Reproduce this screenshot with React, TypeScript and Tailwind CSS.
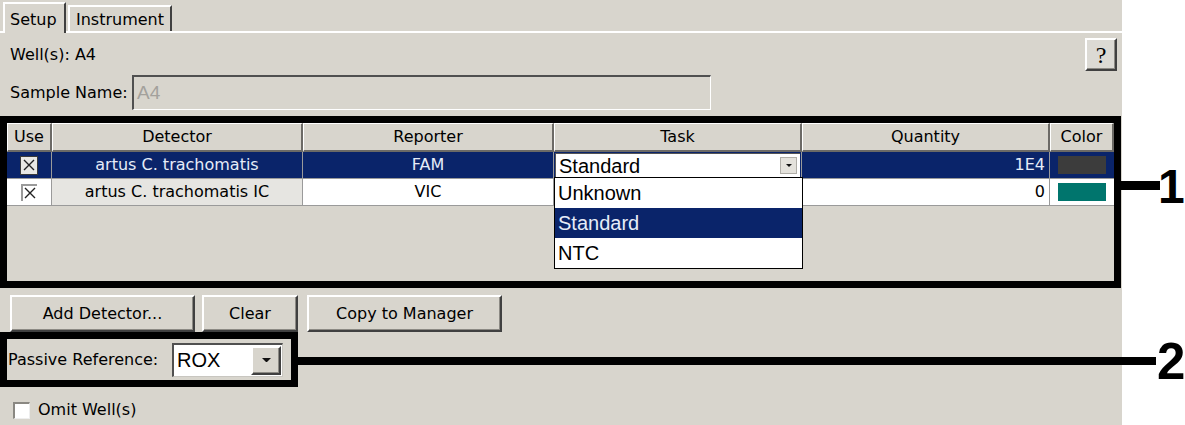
import React from 'react';

const ui = { fontFamily: '"DejaVu Sans", Verdana, sans-serif' };
const arial = { fontFamily: '"Liberation Sans", Arial, sans-serif' };

const raised =
  'border-t-2 border-l-2 border-t-white border-l-white border-r-2 border-b-2 border-r-[#404040] border-b-[#404040] shadow-[inset_-1px_-1px_0_#8c8a84]';

function CheckX({ boxed }: { boxed: boolean }) {
  return (
    <div
      className={
        boxed
          ? 'w-[18px] h-[19px] bg-[#e9e8e4] border border-[#3a3a3a] flex items-center justify-center'
          : 'w-[16px] h-[17px] border-t-2 border-l-2 border-[#9a9a9a] flex items-center justify-center'
      }
    >
      <svg width="12" height="12" viewBox="0 0 12 12">
        <path d="M1 1 L11 11 M11 1 L1 11" stroke="#222" strokeWidth="1.4" />
      </svg>
    </div>
  );
}

function DownArrow({ size = 8 }: { size?: number }) {
  return (
    <svg width={size} height={size / 2} viewBox="0 0 8 4">
      <path d="M0 0 L8 0 L4 4 Z" fill="#111" />
    </svg>
  );
}

const headers = ['Use', 'Detector', 'Reporter', 'Task', 'Quantity', 'Color'];

export default function App() {
  return (
    <div className="relative flex w-[1185px] h-[425px] bg-white overflow-hidden" style={ui}>
      {/* dialog panel */}
      <div className="w-[1122px] h-full bg-[#d8d5cd] flex flex-col text-[16px] text-black">
        {/* tabs */}
        <div className="h-[33px] flex items-end pl-[3px] border-b-2 border-white">
          <div className="h-[31px] -mb-[2px] w-[63px] bg-[#d8d5cd] border-t-2 border-l-2 border-white border-r-2 border-r-[#404040] pl-[5px] pt-[4px]">
            Setup
          </div>
          <div className="h-[26px] w-[104px] ml-[2px] border-t-2 border-l-2 border-white border-r-2 border-r-[#404040] pl-[6px] pt-[1px]">
            Instrument
          </div>
        </div>

        {/* well row */}
        <div className="mt-[5px] h-[33px] flex items-center justify-between pl-[10px] pr-[5px]">
          <span>Well(s): A4</span>
          <div
            className={`w-[32px] h-[33px] bg-[#dcdad4] flex items-center justify-center text-[24px] ${raised}`}
            style={{ fontFamily: '"Liberation Serif", serif' }}
          >
            ?
          </div>
        </div>

        {/* sample name */}
        <div className="mt-[4px] h-[35px] flex items-center pl-[10px]">
          <span className="w-[122px]">Sample Name:</span>
          <div
            className="w-[579px] h-[35px] border-t-2 border-l-2 border-[#505050] border-r border-b border-r-white border-b-white flex items-center pl-[3px] text-[19px] text-[#a3a19c]"
            style={arial}
          >
            A4
          </div>
        </div>

        {/* detector table */}
        <div className="mt-[6px] w-[1121px] h-[172px] border-[7px] border-black">
          <div className="grid grid-cols-[45px_251px_251px_248px_248px_64px]">
            {headers.map((h) => (
              <div
                key={h}
                className="h-[29px] bg-[#d8d5cd] border-t border-l border-white border-r-2 border-b-2 border-r-[#6c6a66] border-b-[#6c6a66] flex items-center justify-center"
              >
                {h}
              </div>
            ))}

            {/* row 1 */}
            <div className="h-[27px] bg-[#0a246a] border-r border-b border-[#9a9a9a] flex items-center justify-center">
              <CheckX boxed />
            </div>
            <div className="h-[27px] bg-[#0a246a] text-[#e6ecf8] border-r border-b border-[#9a9a9a] flex items-center justify-center">
              artus C. trachomatis
            </div>
            <div className="h-[27px] bg-[#0a246a] text-[#e6ecf8] border-r border-b border-[#9a9a9a] flex items-center justify-center">
              FAM
            </div>
            <div className="relative h-[27px] bg-[#0a246a] border-r border-b border-[#9a9a9a] p-[1px]">
              <div
                className="h-full bg-white border-t border-l border-[#555] flex items-center justify-between pl-[3px] pr-[3px] text-[20px]"
                style={arial}
              >
                <span>Standard</span>
                <div className="w-[17px] h-[17px] bg-[#e4e2dc] border border-[#b0aea8] flex items-center justify-center">
                  <DownArrow size={6} />
                </div>
              </div>
              {/* open list */}
              <div
                className="absolute z-10 left-0 top-[25px] w-[249px] h-[92px] bg-white border border-black flex flex-col text-[20px]"
                style={arial}
              >
                <div className="h-[30px] flex items-center pl-[3px]">Unknown</div>
                <div className="h-[30px] flex items-center pl-[3px] bg-[#0a246a] text-[#e6ecf8]">Standard</div>
                <div className="h-[30px] flex items-center pl-[3px]">NTC</div>
              </div>
            </div>
            <div className="h-[27px] bg-[#0a246a] text-[#e6ecf8] border-r border-b border-[#9a9a9a] flex items-center justify-end pr-[4px]">
              1E4
            </div>
            <div className="h-[27px] bg-[#0a246a] border-b border-[#9a9a9a] flex items-center justify-center">
              <div className="w-[48px] h-[18px] bg-[#3c3c3c]" />
            </div>

            {/* row 2 */}
            <div className="h-[27px] bg-white border-r border-b border-[#9a9a9a] flex items-center justify-center">
              <CheckX boxed={false} />
            </div>
            <div className="h-[27px] bg-[#e6e5e1] border-r border-b border-[#9a9a9a] flex items-center justify-center">
              artus C. trachomatis IC
            </div>
            <div className="h-[27px] bg-white border-r border-b border-[#9a9a9a] flex items-center justify-center">
              VIC
            </div>
            <div className="h-[27px] bg-white border-r border-b border-[#9a9a9a]" />
            <div className="h-[27px] bg-white border-r border-b border-[#9a9a9a] flex items-center justify-end pr-[4px]">
              0
            </div>
            <div className="h-[27px] bg-white border-b border-[#9a9a9a] flex items-center justify-center">
              <div className="w-[48px] h-[18px] bg-[#00756d]" />
            </div>
          </div>
        </div>

        {/* buttons */}
        <div className="mt-[7px] flex pl-[10px]">
          <div className={`w-[185px] h-[37px] flex items-center justify-center ${raised}`}>Add Detector...</div>
          <div className={`ml-[7px] w-[96px] h-[37px] flex items-center justify-center ${raised}`}>Clear</div>
          <div className={`ml-[9px] w-[195px] h-[37px] flex items-center justify-center ${raised}`}>Copy to Manager</div>
        </div>

        {/* passive reference */}
        <div className="w-[298px] h-[55px] border-[7px] border-black flex items-center pl-[1px]">
          <span className="w-[164px] whitespace-nowrap">Passive Reference:</span>
          <div className="w-[111px] h-[34px] bg-white border-t-2 border-l-2 border-[#505050] border-r border-b border-r-[#c8c6c0] border-b-[#c8c6c0] flex items-center justify-between pl-[3px] pr-[1px]">
            <span className="text-[20px]" style={arial}>
              ROX
            </span>
            <div className={`w-[30px] h-[29px] bg-[#d8d5cd] flex items-center justify-center ${raised}`}>
              <DownArrow size={9} />
            </div>
          </div>
        </div>

        {/* omit */}
        <div className="mt-[11px] flex items-center pl-[13px]">
          <div className="w-[17px] h-[17px] bg-white border-t-2 border-l-2 border-[#8a8882] border-r border-b border-r-[#eeeeee] border-b-[#eeeeee]" />
          <span className="ml-[8px]">Omit Well(s)</span>
        </div>
      </div>

      {/* annotation callouts */}
      <div className="absolute left-[1121px] top-[181px] w-[39px] h-[9px] bg-black" />
      <div
        className="absolute left-[1158px] top-[163px] text-[48px] font-bold leading-none"
        style={arial}
      >
        1
      </div>
      <div className="absolute left-[298px] top-[357px] w-[858px] h-[8px] bg-black" />
      <div
        className="absolute left-[1157px] top-[336px] text-[51px] font-bold leading-none"
        style={arial}
      >
        2
      </div>
    </div>
  );
}
